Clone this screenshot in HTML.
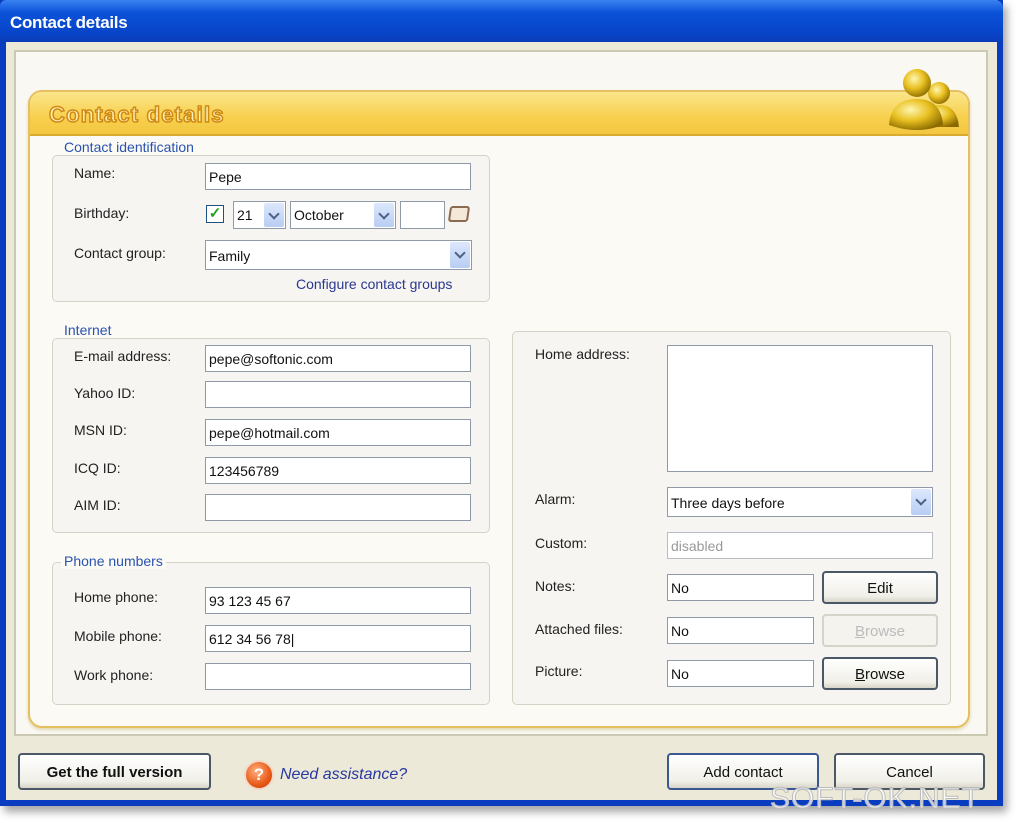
<!DOCTYPE html>
<html><head><meta charset="utf-8"><style>
*{box-sizing:border-box;margin:0;padding:0}
body{width:1020px;height:823px;background:#fff;position:relative;overflow:hidden;font-family:"Liberation Sans",sans-serif;font-size:14px;color:#222}
.a{position:absolute}
.win{left:0;top:0;width:1003px;height:806px;background:#ece9d8;border:6px solid #0a3cc0;border-top:none;box-shadow:4px 6px 8px rgba(0,0,0,.35)}
.title{left:0;top:0;width:1003px;height:42px;background:linear-gradient(#3a82f0,#0a52d8 30%,#0844c8 80%,#0a3cb8);border-radius:6px 8px 0 0;color:#fff;font-weight:bold;font-size:17px;padding:13px 0 0 10px;letter-spacing:-.3px}
.inner{left:14px;top:50px;width:974px;height:686px;background:#f9f8f2;border:2px solid #cbc8b4}
.org{left:28px;top:90px;width:942px;height:638px;background:#fbfaf4;border:2px solid #e6c060;border-radius:14px;overflow:hidden;box-shadow:0 2px 3px #e0d8b0}
.band{left:0;top:0;width:100%;height:44px;background:linear-gradient(#fbe58a,#f7d04e 60%,#f3c640);border-bottom:2px solid #d9aa30}
.hd{left:19px;top:10px;font-size:22px;font-weight:bold;color:#fff0c0;-webkit-text-stroke:1.5px #d08a10;letter-spacing:1.2px}
.grp{border:1px solid #d6d3c6;border-radius:5px;background:#f6f5f1}
.lg{background:#fbfaf4;color:#2a52b0;font-size:14px;padding:0 3px}
.lb{font-size:14px;color:#222}
.in{background:#fff;border:1px solid #8e9aa8;height:27px;padding:5px 3px;font-size:14px;color:#111}
.dd{position:absolute;right:1px;top:1px;bottom:1px;width:20px;background:linear-gradient(#dce8fc,#b8cdf4);border-radius:2px}
.dd:after{content:"";position:absolute;left:6px;top:7px;width:6px;height:6px;border-right:2px solid #4d6185;border-bottom:2px solid #4d6185;transform:rotate(45deg)}
.btn{background:linear-gradient(#fff,#f0efe8 80%,#d8d5c8);border:2px solid #4a5868;border-radius:4px;text-align:center;font-size:15px;color:#111}
</style></head><body>
<div class="a win"></div>
<div class="a title">Contact details</div>
<div class="a inner"></div>
<div class="a org"><div class="a band"></div><div class="a hd">Contact details</div></div>
<svg class="a" style="left:873px;top:55px" width="100" height="80" viewBox="0 0 100 80">
<defs><radialGradient id="g" cx=".4" cy=".35" r=".7"><stop offset="0" stop-color="#fff6b0"/><stop offset=".5" stop-color="#e8c020"/><stop offset="1" stop-color="#8a6a00"/></radialGradient></defs>
<circle cx="66" cy="38" r="11" fill="url(#g)"/><path d="M48 72 Q50 50 66 50 Q84 50 86 72 Z" fill="url(#g)"/>
<circle cx="44" cy="28" r="14" fill="url(#g)"/><path d="M16 70 Q18 44 44 44 Q68 44 70 70 Q44 80 16 70Z" fill="url(#g)"/>
</svg>

<div class="a grp" style="left:52px;top:155px;width:438px;height:147px"></div>
<div class="a lg" style="left:61px;top:139px">Contact identification</div>
<div class="a lb" style="left:74px;top:165px">Name:</div>
<div class="a in" style="left:205px;top:163px;width:266px">Pepe</div>
<div class="a lb" style="left:74px;top:205px">Birthday:</div>
<div class="a" style="left:206px;top:205px;width:18px;height:18px;border:1px solid #1c5180;background:#fff;color:#21a121;font-size:15px;line-height:16px;text-align:center;font-weight:bold">✓</div>
<div class="a in" style="left:233px;top:201px;width:53px;height:28px">21<span class="dd"></span></div>
<div class="a in" style="left:290px;top:201px;width:106px;height:28px">October<span class="dd"></span></div>
<div class="a in" style="left:400px;top:201px;width:45px;height:28px"></div>
<div class="a" style="left:449px;top:206px;width:20px;height:16px;border:2px solid #8a6a50;border-radius:3px;background:#f4e8d8;transform:skewX(-8deg)"></div>
<div class="a lb" style="left:74px;top:245px">Contact group:</div>
<div class="a in" style="left:205px;top:240px;width:267px;height:30px;padding-top:7px">Family<span class="dd"></span></div>
<div class="a" style="left:296px;top:276px;color:#2a3890">Configure contact groups</div>

<div class="a grp" style="left:52px;top:338px;width:438px;height:195px"></div>
<div class="a lg" style="left:61px;top:322px">Internet</div>
<div class="a lb" style="left:74px;top:348px">E-mail address:</div>
<div class="a in" style="left:205px;top:345px;width:266px">pepe@softonic.com</div>
<div class="a lb" style="left:74px;top:385px">Yahoo ID:</div>
<div class="a in" style="left:205px;top:381px;width:266px"></div>
<div class="a lb" style="left:74px;top:422px">MSN ID:</div>
<div class="a in" style="left:205px;top:419px;width:266px">pepe@hotmail.com</div>
<div class="a lb" style="left:74px;top:460px">ICQ ID:</div>
<div class="a in" style="left:205px;top:457px;width:266px">123456789</div>
<div class="a lb" style="left:74px;top:497px">AIM ID:</div>
<div class="a in" style="left:205px;top:494px;width:266px"></div>

<div class="a grp" style="left:52px;top:562px;width:438px;height:143px"></div>
<div class="a lg" style="left:61px;top:553px">Phone numbers</div>
<div class="a lb" style="left:74px;top:589px">Home phone:</div>
<div class="a in" style="left:205px;top:587px;width:266px">93 123 45 67</div>
<div class="a lb" style="left:74px;top:628px">Mobile phone:</div>
<div class="a in" style="left:205px;top:625px;width:266px">612 34 56 78|</div>
<div class="a lb" style="left:74px;top:667px">Work phone:</div>
<div class="a in" style="left:205px;top:663px;width:266px"></div>

<div class="a grp" style="left:512px;top:331px;width:439px;height:374px"></div>
<div class="a lb" style="left:535px;top:346px">Home address:</div>
<div class="a in" style="left:667px;top:345px;width:266px;height:127px"></div>
<div class="a lb" style="left:535px;top:491px">Alarm:</div>
<div class="a in" style="left:667px;top:487px;width:266px;height:30px;padding-top:7px">Three days before<span class="dd"></span></div>
<div class="a lb" style="left:535px;top:535px">Custom:</div>
<div class="a in" style="left:667px;top:532px;width:266px;color:#999;border-color:#b8bcc4">disabled</div>
<div class="a lb" style="left:535px;top:578px">Notes:</div>
<div class="a in" style="left:667px;top:574px;width:147px">No</div>
<div class="a btn" style="left:822px;top:571px;width:116px;height:33px;padding-top:7px">Edit</div>
<div class="a lb" style="left:535px;top:621px">Attached files:</div>
<div class="a in" style="left:667px;top:617px;width:147px">No</div>
<div class="a btn" style="left:822px;top:614px;width:116px;height:33px;padding-top:7px;border-color:#d6d4c8;color:#bbb;background:#f4f3ee"><u>B</u>rowse</div>
<div class="a lb" style="left:535px;top:663px">Picture:</div>
<div class="a in" style="left:667px;top:660px;width:147px">No</div>
<div class="a btn" style="left:822px;top:657px;width:116px;height:33px;padding-top:7px"><u>B</u>rowse</div>

<div class="a btn" style="left:18px;top:753px;width:193px;height:37px;padding-top:9px;font-weight:bold">Get the full version</div>
<div class="a" style="left:244px;top:760px;width:30px;height:30px;border-radius:50%;background:radial-gradient(circle at 40% 35%,#ffb080,#e85a18 60%,#b83808);border:2px solid #f4d8c8;color:#fff;font-weight:bold;font-size:17px;text-align:center;line-height:26px">?</div>
<div class="a" style="left:280px;top:766px;color:#2838a0;font-style:italic;font-size:16px">Need assistance?</div>
<div class="a btn" style="left:667px;top:753px;width:152px;height:37px;padding-top:9px;border-color:#3c5890">Add contact</div>
<div class="a btn" style="left:834px;top:753px;width:151px;height:37px;padding-top:9px">Cancel</div>
<div class="a" style="left:770px;top:782px;font-size:30px;color:rgba(255,255,255,.75);-webkit-text-stroke:1px #bbb;letter-spacing:1px">SOFT-OK.NET</div>
</body></html>
